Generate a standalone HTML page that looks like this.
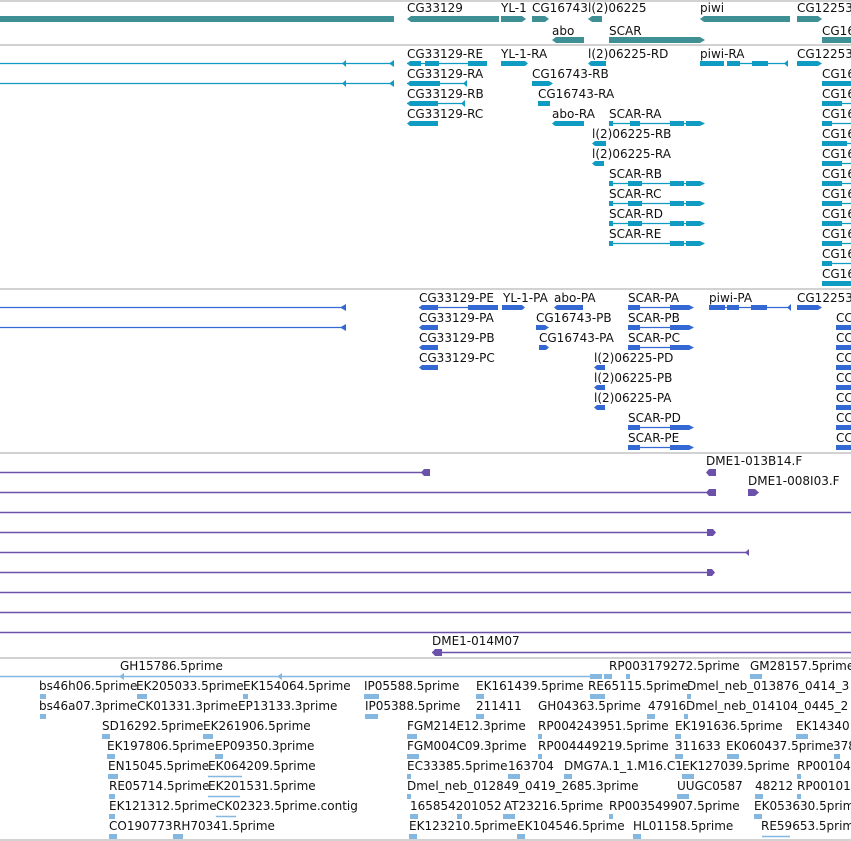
<!DOCTYPE html>
<html><head><meta charset="utf-8"><style>
html,body{margin:0;padding:0;background:#fff;width:851px;height:841px;overflow:hidden}
svg{display:block}
text{font-family:"DejaVu Sans","Liberation Sans",sans-serif;font-size:12px;fill:#111}
.t1{fill:#3f9095}.t2{fill:#0f9bc2}.t3{fill:#3468d2}.t4{fill:#6b51a9}.t5{fill:#84b8e0}
.l2{stroke:#0f9bc2;stroke-width:1.2}.l3{stroke:#3468d2;stroke-width:1.2}.l4{stroke:#6b51a9;stroke-width:1.5}.l5{stroke:#84b8e0;stroke-width:1.5}
.sep{stroke:#c4c4c4;stroke-width:1.5}
</style></head><body>
<svg width="851" height="841" viewBox="0 0 851 841" xmlns="http://www.w3.org/2000/svg">
<line class="sep" x1="0" y1="1" x2="851" y2="1"/>
<line class="sep" x1="0" y1="45" x2="851" y2="45"/>
<line class="sep" x1="0" y1="289" x2="851" y2="289"/>
<line class="sep" x1="0" y1="453" x2="851" y2="453"/>
<line class="sep" x1="0" y1="658" x2="851" y2="658"/>
<line class="sep" x1="0" y1="840" x2="851" y2="840"/>

<!-- Track 1 -->
<g class="t1">
<rect x="0" y="16" width="394" height="6"/>
<polygon points="407,19 411,16 499,16 499,22 411,22"/>
<polygon points="501,16 522,16 526,19 522,22 501,22"/>
<polygon points="532,16 545,16 549,19 545,22 532,22"/>
<polygon points="588,19 592,16 602,16 602,22 592,22"/>
<polygon points="700,19 704,16 790,16 790,22 704,22"/>
<polygon points="797,16 818,16 822,19 818,22 797,22"/>
<polygon points="552,40 556,37 584,37 584,43 556,43"/>
<polygon points="609,37 700,37 705,40 700,43 609,43"/>
<rect x="822" y="37" width="29" height="6"/>
</g>
<text x="407" y="12">CG33129</text><text x="501" y="12">YL-1</text><text x="532" y="12">CG16743</text><text x="588" y="12">l(2)06225</text><text x="700" y="12">piwi</text><text x="797" y="12">CG12253</text>
<text x="552" y="35">abo</text><text x="609" y="35">SCAR</text><text x="822" y="35">CG16</text>

<!-- Track 2 -->
<g class="l2">
<line x1="0" y1="63.5" x2="393" y2="63.5"/><line x1="0" y1="83.5" x2="393" y2="83.5"/>
<line x1="407" y1="63.5" x2="487" y2="63.5"/>
<line x1="407" y1="83.5" x2="467" y2="83.5"/>
<line x1="407" y1="103.5" x2="465" y2="103.5"/>
<line x1="727" y1="63.5" x2="788" y2="63.5"/>
<line x1="609" y1="123.5" x2="704" y2="123.5"/>
<line x1="609" y1="183.5" x2="704" y2="183.5"/>
<line x1="609" y1="203.5" x2="704" y2="203.5"/>
<line x1="609" y1="223.5" x2="704" y2="223.5"/>
<line x1="609" y1="243.5" x2="704" y2="243.5"/>
<line x1="822" y1="103.5" x2="851" y2="103.5"/><line x1="822" y1="123.5" x2="851" y2="123.5"/><line x1="822" y1="143.5" x2="851" y2="143.5"/><line x1="822" y1="163.5" x2="851" y2="163.5"/><line x1="822" y1="183.5" x2="851" y2="183.5"/><line x1="822" y1="203.5" x2="851" y2="203.5"/><line x1="822" y1="223.5" x2="851" y2="223.5"/><line x1="822" y1="243.5" x2="851" y2="243.5"/><line x1="822" y1="263.5" x2="851" y2="263.5"/><line x1="822" y1="283.5" x2="851" y2="283.5"/>
</g>
<g class="t2">
<polygon points="342,63.5 346,60 346,67"/><polygon points="389,63.5 394,60 394,67"/>
<polygon points="389,83.5 394,80 394,87"/><polygon points="342,83.5 346,80 346,87"/>
<polygon points="407,63.5 410,61 421,61 421,66 410,66"/><rect x="425" y="61" width="14" height="5"/><rect x="468" y="61" width="19" height="5"/>
<polygon points="501,61 525,61 528,63.5 525,66 501,66"/>
<polygon points="588,63.5 591,61 606,61 606,66 591,66"/>
<rect x="700" y="61" width="24" height="5"/><rect x="727" y="61" width="13" height="5"/><rect x="752" y="61" width="16" height="5"/><polygon points="784,63.5 788,60 788,67"/>
<polygon points="797,61 818,61 822,63.5 818,66 797,66"/>
<polygon points="407,83.5 410,81 440,81 440,86 410,86"/><polygon points="463,83.5 467,80 467,87"/>
<polygon points="407,103.5 410,101 438,101 438,106 410,106"/><polygon points="461,103.5 465,100 465,107"/>
<polygon points="407,123.5 410,121 438,121 438,126 410,126"/>
<polygon points="532,81 549,81 553,83.5 549,86 532,86"/>
<rect x="538" y="101" width="12" height="5"/>
<polygon points="552,123.5 555,121 584,121 584,126 555,126"/>
<rect x="609" y="121" width="4" height="5"/><rect x="630" y="121" width="10" height="5"/><rect x="670" y="121" width="14" height="5"/><polygon points="686,121 700,121 705,123.5 700,126 686,126"/>
<rect x="609" y="181" width="4" height="5"/><rect x="628" y="181" width="14" height="5"/><rect x="670" y="181" width="14" height="5"/><polygon points="686,181 700,181 705,183.5 700,186 686,186"/>
<rect x="609" y="201" width="4" height="5"/><rect x="628" y="201" width="14" height="5"/><rect x="670" y="201" width="14" height="5"/><polygon points="686,201 700,201 705,203.5 700,206 686,206"/>
<rect x="609" y="221" width="4" height="5"/><rect x="628" y="221" width="14" height="5"/><rect x="670" y="221" width="14" height="5"/><polygon points="686,221 700,221 705,223.5 700,226 686,226"/>
<rect x="609" y="241" width="4" height="5"/><rect x="670" y="241" width="14" height="5"/><polygon points="686,241 700,241 705,243.5 700,246 686,246"/>
<polygon points="592,143.5 595,141 606,141 606,146 595,146"/>
<polygon points="592,163.5 595,161 604,161 604,166 595,166"/>
<rect x="822" y="81" width="29" height="5"/><rect x="822" y="101" width="20" height="5"/><rect x="822" y="121" width="10" height="5"/><rect x="822" y="141" width="25" height="5"/><rect x="822" y="161" width="20" height="5"/><rect x="822" y="181" width="20" height="5"/><rect x="822" y="201" width="20" height="5"/><rect x="822" y="221" width="20" height="5"/><rect x="822" y="241" width="20" height="5"/><rect x="822" y="261" width="10" height="5"/><rect x="822" y="281" width="29" height="5"/>
</g>
<text x="407" y="58">CG33129-RE</text><text x="501" y="58">YL-1-RA</text><text x="588" y="58">l(2)06225-RD</text><text x="700" y="58">piwi-RA</text><text x="797" y="58">CG12253</text>
<text x="407" y="78">CG33129-RA</text><text x="532" y="78">CG16743-RB</text>
<text x="407" y="98">CG33129-RB</text><text x="538" y="98">CG16743-RA</text>
<text x="407" y="118">CG33129-RC</text><text x="552" y="118">abo-RA</text><text x="609" y="118">SCAR-RA</text>
<text x="592" y="138">l(2)06225-RB</text><text x="592" y="158">l(2)06225-RA</text>
<text x="609" y="178">SCAR-RB</text><text x="609" y="198">SCAR-RC</text><text x="609" y="218">SCAR-RD</text><text x="609" y="238">SCAR-RE</text>
<text x="822" y="78">CG16</text><text x="822" y="98">CG16</text><text x="822" y="118">CG16</text><text x="822" y="138">CG16</text><text x="822" y="158">CG16</text><text x="822" y="178">CG16</text><text x="822" y="198">CG16</text><text x="822" y="218">CG16</text><text x="822" y="238">CG16</text><text x="822" y="258">CG16</text><text x="822" y="278">CG16</text>

<!-- Track 3 -->
<g class="l3">
<line x1="0" y1="307.5" x2="345" y2="307.5"/><line x1="0" y1="327.5" x2="345" y2="327.5"/>
<line x1="419" y1="307.5" x2="498" y2="307.5"/>
<line x1="628" y1="307.5" x2="693" y2="307.5"/><line x1="628" y1="327.5" x2="693" y2="327.5"/><line x1="628" y1="347.5" x2="693" y2="347.5"/><line x1="628" y1="427.5" x2="693" y2="427.5"/><line x1="628" y1="447.5" x2="693" y2="447.5"/>
<line x1="709" y1="307.5" x2="791" y2="307.5"/>
</g>
<g class="t3">
<polygon points="340,307.5 346,304 346,311"/><polygon points="340,327.5 346,324 346,331"/>
<polygon points="419,307.5 422,305 438,305 438,310 422,310"/><rect x="468" y="305" width="30" height="5"/>
<polygon points="502,305 522,305 525,307.5 522,310 502,310"/>
<polygon points="554,307.5 557,305 583,305 583,310 557,310"/>
<rect x="628" y="305" width="12" height="5"/><polygon points="670,305 689,305 694,307.5 689,310 670,310"/>
<rect x="709" y="305" width="16" height="5"/><rect x="727" y="305" width="12" height="5"/><rect x="751" y="305" width="16" height="5"/><polygon points="787,307.5 791,304 791,311"/>
<polygon points="797,305 818,305 822,307.5 818,310 797,310"/>
<polygon points="419,327.5 422,325 438,325 438,330 422,330"/>
<polygon points="419,347.5 422,345 438,345 438,350 422,350"/>
<polygon points="419,367.5 422,365 438,365 438,370 422,370"/>
<polygon points="536,325 545,325 549,327.5 545,330 536,330"/>
<polygon points="539,345 546,345 549,347.5 546,350 539,350"/>
<rect x="628" y="325" width="12" height="5"/><polygon points="670,325 689,325 694,327.5 689,330 670,330"/>
<rect x="628" y="345" width="12" height="5"/><polygon points="670,345 689,345 694,347.5 689,350 670,350"/>
<rect x="628" y="425" width="12" height="5"/><polygon points="670,425 689,425 694,427.5 689,430 670,430"/>
<rect x="628" y="445" width="12" height="5"/><polygon points="670,445 689,445 694,447.5 689,450 670,450"/>
<polygon points="594,387.5 597,385 605,385 605,390 597,390"/>
<polygon points="594,367.5 597,365 605,365 605,370 597,370"/>
<polygon points="594,407.5 597,405 605,405 605,410 597,410"/>
<rect x="836" y="325" width="15" height="5"/><rect x="836" y="345" width="15" height="5"/><rect x="836" y="365" width="15" height="5"/><rect x="836" y="385" width="15" height="5"/><rect x="836" y="405" width="15" height="5"/><rect x="836" y="425" width="15" height="5"/><rect x="836" y="445" width="15" height="5"/>
</g>
<text x="419" y="302">CG33129-PE</text><text x="503" y="302">YL-1-PA</text><text x="554" y="302">abo-PA</text><text x="628" y="302">SCAR-PA</text><text x="709" y="302">piwi-PA</text><text x="797" y="302">CG12253</text>
<text x="419" y="322">CG33129-PA</text><text x="536" y="322">CG16743-PB</text><text x="628" y="322">SCAR-PB</text>
<text x="419" y="342">CG33129-PB</text><text x="539" y="342">CG16743-PA</text><text x="628" y="342">SCAR-PC</text>
<text x="419" y="362">CG33129-PC</text><text x="594" y="362">l(2)06225-PD</text>
<text x="594" y="382">l(2)06225-PB</text><text x="594" y="402">l(2)06225-PA</text>
<text x="628" y="422">SCAR-PD</text><text x="628" y="442">SCAR-PE</text>
<text x="836" y="322">CC</text><text x="836" y="342">CC</text><text x="836" y="362">CC</text><text x="836" y="382">CC</text><text x="836" y="402">CC</text><text x="836" y="422">CC</text><text x="836" y="442">CC</text>

<!-- Track 4 -->
<g class="l4">
<line x1="0" y1="472.5" x2="428" y2="472.5"/>
<line x1="0" y1="492.5" x2="716" y2="492.5"/>
<line x1="0" y1="512.5" x2="851" y2="512.5"/>
<line x1="0" y1="532.5" x2="714" y2="532.5"/>
<line x1="0" y1="552.5" x2="749" y2="552.5"/>
<line x1="0" y1="572.5" x2="714" y2="572.5"/>
<line x1="0" y1="592.5" x2="851" y2="592.5"/>
<line x1="0" y1="612.5" x2="851" y2="612.5"/>
<line x1="0" y1="632.5" x2="851" y2="632.5"/>
<line x1="432" y1="652.5" x2="851" y2="652.5"/>
</g>
<g class="t4">
<polygon points="421,472.5 424,469 430,469 430,476 424,476"/>
<polygon points="706,472.5 709,469 716,469 716,476 709,476"/>
<polygon points="706,492.5 709,489 716,489 716,496 709,496"/>
<polygon points="748,489 755,489 759,492.5 755,496 748,496"/>
<polygon points="707,529 713,529 716,532.5 713,536 707,536"/>
<polygon points="745,552.5 749,549 749,556"/>
<polygon points="707,569 712,569 715,572.5 712,576 707,576"/>
<polygon points="432,652.5 435,649 442,649 442,656 435,656"/>
</g>
<text x="706" y="465">DME1-013B14.F</text><text x="748" y="485">DME1-008I03.F</text><text x="432" y="645">DME1-014M07</text>

<!-- Track 5 -->
<line class="l5" x1="0" y1="676.5" x2="590" y2="676.5"/>
<line class="l5" x1="208" y1="776.5" x2="242" y2="776.5"/>
<line class="l5" x1="208" y1="796.5" x2="240" y2="796.5"/>
<line class="l5" x1="216" y1="816.5" x2="236" y2="816.5"/>
<line class="l5" x1="762" y1="836.5" x2="790" y2="836.5"/>
<g class="t5">
<polygon points="119,676.5 124,673 124,680"/><polygon points="277,676.5 282,673 282,680"/>
<rect x="590" y="674" width="12" height="5"/><rect x="604" y="674" width="8" height="5"/><rect x="626" y="674" width="4" height="5"/>
<rect x="750" y="674" width="12" height="5"/>
<rect x="40" y="694" width="6" height="5"/><rect x="137" y="694" width="10" height="5"/><rect x="243" y="694" width="5" height="5"/><rect x="364" y="694" width="15" height="5"/><rect x="476" y="694" width="8" height="5"/><rect x="590" y="694" width="15" height="5"/><rect x="687" y="694" width="4" height="5"/>
<rect x="40" y="714" width="6" height="5"/><rect x="365" y="714" width="13" height="5"/><rect x="476" y="714" width="8" height="5"/><rect x="647" y="714" width="8" height="5"/><rect x="684" y="714" width="4" height="5"/>
<rect x="102" y="734" width="8" height="5"/><rect x="203" y="734" width="10" height="5"/><rect x="407" y="734" width="10" height="5"/><rect x="538" y="734" width="4" height="5"/><rect x="675" y="734" width="6" height="5"/><rect x="796" y="734" width="12" height="5"/>
<rect x="107" y="754" width="8" height="5"/><rect x="215" y="754" width="8" height="5"/><rect x="407" y="754" width="12" height="5"/><rect x="538" y="754" width="4" height="5"/><rect x="675" y="754" width="8" height="5"/><rect x="727" y="754" width="12" height="5"/><rect x="834" y="754" width="6" height="5"/>
<rect x="108" y="774" width="10" height="5"/><rect x="407" y="774" width="4" height="5"/><rect x="508" y="774" width="12" height="5"/><rect x="564" y="774" width="8" height="5"/><rect x="682" y="774" width="12" height="5"/><rect x="797" y="774" width="4" height="5"/>
<rect x="109" y="794" width="6" height="5"/><rect x="407" y="794" width="4" height="5"/><rect x="677" y="794" width="12" height="5"/><rect x="755" y="794" width="8" height="5"/><rect x="797" y="794" width="4" height="5"/>
<rect x="109" y="814" width="6" height="5"/><rect x="410" y="814" width="8" height="5"/><rect x="457" y="814" width="5" height="5"/><rect x="503" y="814" width="12" height="5"/><rect x="609" y="814" width="4" height="5"/><rect x="754" y="814" width="8" height="5"/>
<rect x="109" y="834" width="8" height="5"/><rect x="173" y="834" width="10" height="5"/><rect x="409" y="834" width="8" height="5"/><rect x="517" y="834" width="8" height="5"/><rect x="633" y="834" width="8" height="5"/>
</g>
<text x="120" y="670">GH15786.5prime</text><text x="609" y="670">RP003179272.5prime</text><text x="750" y="670">GM28157.5prime</text>
<text x="39" y="690">bs46h06.5prime</text><text x="136" y="690">EK205033.5prime</text><text x="243" y="690">EK154064.5prime</text><text x="364" y="690">IP05588.5prime</text><text x="476" y="690">EK161439.5prime</text><text x="588" y="690">RE65115.5prime</text><text x="687" y="690">Dmel_neb_013876_0414_3</text>
<text x="39" y="710">bs46a07.3prime</text><text x="137" y="710">CK01331.3prime</text><text x="238" y="710">EP13133.3prime</text><text x="365" y="710">IP05388.5prime</text><text x="476" y="710">211411</text><text x="538" y="710">GH04363.5prime</text><text x="648" y="710">47916</text><text x="686" y="710">Dmel_neb_014104_0445_2</text>
<text x="102" y="730">SD16292.5prime</text><text x="203" y="730">EK261906.5prime</text><text x="407" y="730">FGM214E12.3prime</text><text x="538" y="730">RP004243951.5prime</text><text x="675" y="730">EK191636.5prime</text><text x="796" y="730">EK14340</text>
<text x="107" y="750">EK197806.5prime</text><text x="215" y="750">EP09350.3prime</text><text x="407" y="750">FGM004C09.3prime</text><text x="538" y="750">RP004449219.5prime</text><text x="675" y="750">311633</text><text x="726" y="750">EK060437.5prime</text><text x="833" y="750">378</text>
<text x="108" y="770">EN15045.5prime</text><text x="208" y="770">EK064209.5prime</text><text x="407" y="770">EC33385.5prime</text><text x="508" y="770">163704</text><text x="564" y="770">DMG7A.1_1.M16.C1</text><text x="682" y="770">EK127039.5prime</text><text x="797" y="770">RP00104</text>
<text x="109" y="790">RE05714.5prime</text><text x="208" y="790">EK201531.5prime</text><text x="407" y="790">Dmel_neb_012849_0419_2685.3prime</text><text x="677" y="790">UUGC0587</text><text x="755" y="790">48212</text><text x="797" y="790">RP00101</text>
<text x="109" y="810">EK121312.5prime</text><text x="216" y="810">CK02323.5prime.contig</text><text x="410" y="810">165854201052</text><text x="504" y="810">AT23216.5prime</text><text x="609" y="810">RP003549907.5prime</text><text x="754" y="810">EK053630.5prime</text>
<text x="109" y="830">CO190773</text><text x="173" y="830">RH70341.5prime</text><text x="409" y="830">EK123210.5prime</text><text x="517" y="830">EK104546.5prime</text><text x="633" y="830">HL01158.5prime</text><text x="761" y="830">RE59653.5prime</text>
</svg>
</body></html>
